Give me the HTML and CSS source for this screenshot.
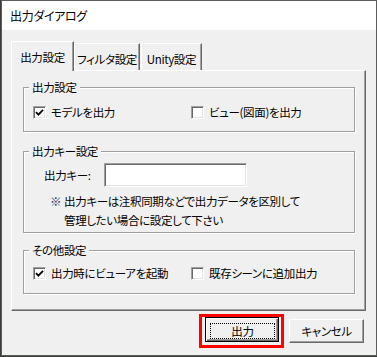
FILE: index.html
```html
<!DOCTYPE html>
<html lang="ja">
<head>
    <meta charset="UTF-8">
    <title>出力ダイアログ</title>
    <link rel="stylesheet" href="styles.css">
</head>
<body>
    <div class="window">
        <div class="titlebar">出力ダイアログ</div>
        <div class="body">
            <div class="tabs">
                <div class="tab active">出力設定</div>
                <div class="tab second">フィルタ設定</div>
                <div class="tab third">Unity設定</div>
            </div>
            <div class="panel">
                <div class="group g1">
                    <div class="legend">出力設定</div>
                    <div class="row">
                        <label class="check first"><span class="box"><svg width="9" height="9" viewBox="0 0 9 9"><path d="M1 4.2 L3.4 6.6 L8 1.8" fill="none" stroke="#000" stroke-width="1.8"/></svg></span>モデルを出力</label>
                        <label class="check"><span class="box"></span>ビュー(図面)を出力</label>
                    </div>
                </div>
                <div class="group g2">
                    <div class="legend">出力キー設定</div>
                    <div class="keyrow">
                        <span class="keylabel">出力キー:</span>
                        <span class="input"></span>
                    </div>
                    <div class="note">
                        <span class="mark">※</span>
                        <div class="note-text">出力キーは注釈同期などで出力データを区別して<br>管理したい場合に設定して下さい</div>
                    </div>
                </div>
                <div class="group g3">
                    <div class="legend">その他設定</div>
                    <div class="row">
                        <label class="check first"><span class="box"><svg width="9" height="9" viewBox="0 0 9 9"><path d="M1 4.2 L3.4 6.6 L8 1.8" fill="none" stroke="#000" stroke-width="1.8"/></svg></span>出力時にビューアを起動</label>
                        <label class="check"><span class="box"></span>既存シーンに追加出力</label>
                    </div>
                </div>
            </div>
            <div class="buttons">
                <span class="highlight">
                    <button class="btn default"><span class="focus">出力</span></button>
                </span>
                <button class="btn cancel">キャンセル</button>
            </div>
        </div>
    </div>
</body>
</html>
```

FILE: styles.css
```css
body {
    margin: 0;
    background-color: #3a3d38;
    font-family: "Noto Sans CJK JP", "Noto Sans", sans-serif;
    font-size: 11.5px;
    letter-spacing: -0.35px;
    font-feature-settings: "palt";
    color: #000;
    white-space: nowrap;
}
.window {
    margin-left: 1px;
    width: 376px;
    height: 356px;
    box-sizing: border-box;
    border: 1px solid #5c5c5c;
    background: #f0f0f0;
}
.titlebar {
    height: 29px;
    line-height: 29px;
    padding-left: 8px;
    font-size: 12px;
    background: #fff;
}
.body {
    padding: 11px 0 0 9px;
}
.tabs {
    display: flex;
    align-items: flex-end;
    height: 29px;
}
.tab {
    display: flex;
    align-items: center;
    justify-content: center;
    flex-shrink: 0;
    box-sizing: border-box;
    height: 27px;
    padding-top: 3px;
    border-top: 1px solid #fff;
    border-left: 1px solid #fff;
    border-right: 1px solid #696969;
    box-shadow: inset -1px 0 #a0a0a0;
}
.tab.active {
    position: relative;
    z-index: 1;
    width: 63px;
    height: 30px;
    margin-bottom: -1px;
    padding-top: 0;
    background: #f0f0f0;
}
.tab.second {
    width: 66px;
}
.tab.third {
    width: 61px;
    margin-left: 1px;
}
.panel {
    box-sizing: border-box;
    width: 355px;
    height: 241px;
    border: 1px solid;
    border-color: #fff #696969 #696969 #fff;
    box-shadow: inset -1px -1px #a0a0a0;
}
.group {
    box-sizing: border-box;
    width: 332px;
    margin-left: 11px;
    border: 1px solid #a0a0a0;
    box-shadow: inset 1px 1px #fff, 1px 1px #fff;
}
.g1 {
    margin-top: 16px;
    height: 45px;
}
.g2 {
    margin-top: 19px;
    height: 82px;
}
.g3 {
    margin-top: 17px;
    height: 44px;
}
.legend {
    width: fit-content;
    height: 14px;
    line-height: 14px;
    margin: -8px 0 0 5px;
    padding: 0 3px;
    background: #f0f0f0;
}
.row {
    display: flex;
    align-items: center;
    height: 16px;
    padding-left: 9px;
}
.g1 .row {
    margin-top: 10px;
}
.g3 .row {
    margin-top: 8px;
}
.check {
    display: flex;
    align-items: center;
    flex-shrink: 0;
    gap: 5px;
}
.check.first {
    width: 158px;
}
.box {
    display: flex;
    align-items: center;
    justify-content: center;
    flex-shrink: 0;
    box-sizing: border-box;
    width: 13px;
    height: 13px;
    background: #fff;
    border: 1px solid;
    border-color: #a0a0a0 #fff #fff #a0a0a0;
    box-shadow: inset 1px 1px #696969, inset -1px -1px #e3e3e3;
}
.keyrow {
    display: flex;
    align-items: center;
    margin-top: 5px;
    padding-left: 20px;
}
.keylabel {
    width: 60px;
}
.input {
    box-sizing: border-box;
    width: 143px;
    height: 24px;
    background: #fff;
    border: 1px solid;
    border-color: #a0a0a0 #fff #fff #a0a0a0;
    box-shadow: inset 1px 1px #696969, inset -1px -1px #e3e3e3;
}
.note {
    display: flex;
    margin-top: 5px;
    padding-left: 26px;
    line-height: 19px;
}
.mark {
    width: 14px;
    color: #2a3170;
}
.buttons {
    display: flex;
    justify-content: flex-end;
    align-items: center;
    margin-top: 3px;
    padding-right: 12px;
}
.highlight {
    display: flex;
    border: 3px solid #ff0000;
    padding: 0 2px 3px 3px;
}
.btn {
    box-sizing: border-box;
    width: 75px;
    height: 24px;
    padding: 0;
    font: inherit;
    letter-spacing: inherit;
    color: #000;
    background: #f0f0f0;
    border: 1px solid;
    border-color: #fff #696969 #696969 #fff;
    box-shadow: inset -1px -1px #a0a0a0;
}
.btn.default {
    display: flex;
    width: 74px;
    height: 25px;
    padding: 5px 3px 2px 4px;
    border-color: #000;
    box-shadow: inset 1px 1px #fff, inset -1px -1px #696969, inset -2px -2px #a0a0a0;
}
.focus {
    display: flex;
    align-items: center;
    justify-content: center;
    flex: 1;
    border: 1px dotted #000;
}
.cancel {
    margin-left: 5px;
}
```
